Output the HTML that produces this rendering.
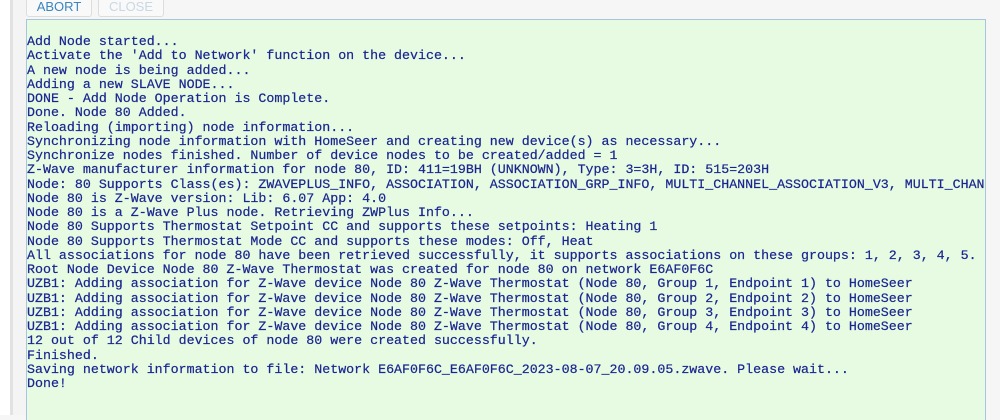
<!DOCTYPE html><html><head><style>
body{margin:0;width:1000px;height:415px;overflow:hidden;background:#f6f6f6;position:relative;font-family:"Liberation Sans",sans-serif}
.l1{position:absolute;left:0;top:0;width:10px;height:415px;background:#fff}
.l2{position:absolute;left:10px;top:0;width:3px;height:415px;background:#e2e2e2}
.l3{position:absolute;left:13px;top:0;width:13px;height:415px;background:#f4f4f4}
.btn{position:absolute;top:-6px;height:21px;border:1px solid #ddd;border-radius:3px;background:#f9f9f9;font-size:13px;line-height:23px;text-align:center}
.box{position:absolute;left:26px;top:19px;width:958px;height:400px;background:#e6fbe2;border:1px solid #a9c4e0;border-bottom:none;overflow:hidden}
pre{margin:0;position:absolute;left:0;top:15px;font-family:"Liberation Mono",monospace;font-size:13.3px;line-height:14.25px;color:#1a2590;white-space:pre;-webkit-text-stroke:0.2px #1a2590}
</style></head><body>
<div class="l1"></div><div class="l2"></div><div class="l3"></div>
<div class="btn" style="left:26px;width:64px;color:#3a86c0">ABORT</div>
<div class="btn" style="left:98px;width:64px;color:#c8d8e4">CLOSE</div>
<div class="box"><pre>Add Node started...
Activate the 'Add to Network' function on the device...
A new node is being added...
Adding a new SLAVE NODE...
DONE - Add Node Operation is Complete.
Done. Node 80 Added.
Reloading (importing) node information...
Synchronizing node information with HomeSeer and creating new device(s) as necessary...
Synchronize nodes finished. Number of device nodes to be created/added = 1
Z-Wave manufacturer information for node 80, ID: 411=19BH (UNKNOWN), Type: 3=3H, ID: 515=203H
Node: 80 Supports Class(es): ZWAVEPLUS_INFO, ASSOCIATION, ASSOCIATION_GRP_INFO, MULTI_CHANNEL_ASSOCIATION_V3, MULTI_CHANNEL_V4
Node 80 is Z-Wave version: Lib: 6.07 App: 4.0
Node 80 is a Z-Wave Plus node. Retrieving ZWPlus Info...
Node 80 Supports Thermostat Setpoint CC and supports these setpoints: Heating 1
Node 80 Supports Thermostat Mode CC and supports these modes: Off, Heat
All associations for node 80 have been retrieved successfully, it supports associations on these groups: 1, 2, 3, 4, 5.
Root Node Device Node 80 Z-Wave Thermostat was created for node 80 on network E6AF0F6C
UZB1: Adding association for Z-Wave device Node 80 Z-Wave Thermostat (Node 80, Group 1, Endpoint 1) to HomeSeer
UZB1: Adding association for Z-Wave device Node 80 Z-Wave Thermostat (Node 80, Group 2, Endpoint 2) to HomeSeer
UZB1: Adding association for Z-Wave device Node 80 Z-Wave Thermostat (Node 80, Group 3, Endpoint 3) to HomeSeer
UZB1: Adding association for Z-Wave device Node 80 Z-Wave Thermostat (Node 80, Group 4, Endpoint 4) to HomeSeer
12 out of 12 Child devices of node 80 were created successfully.
Finished.
Saving network information to file: Network E6AF0F6C_E6AF0F6C_2023-08-07_20.09.05.zwave. Please wait...
Done!</pre></div>
</body></html>
